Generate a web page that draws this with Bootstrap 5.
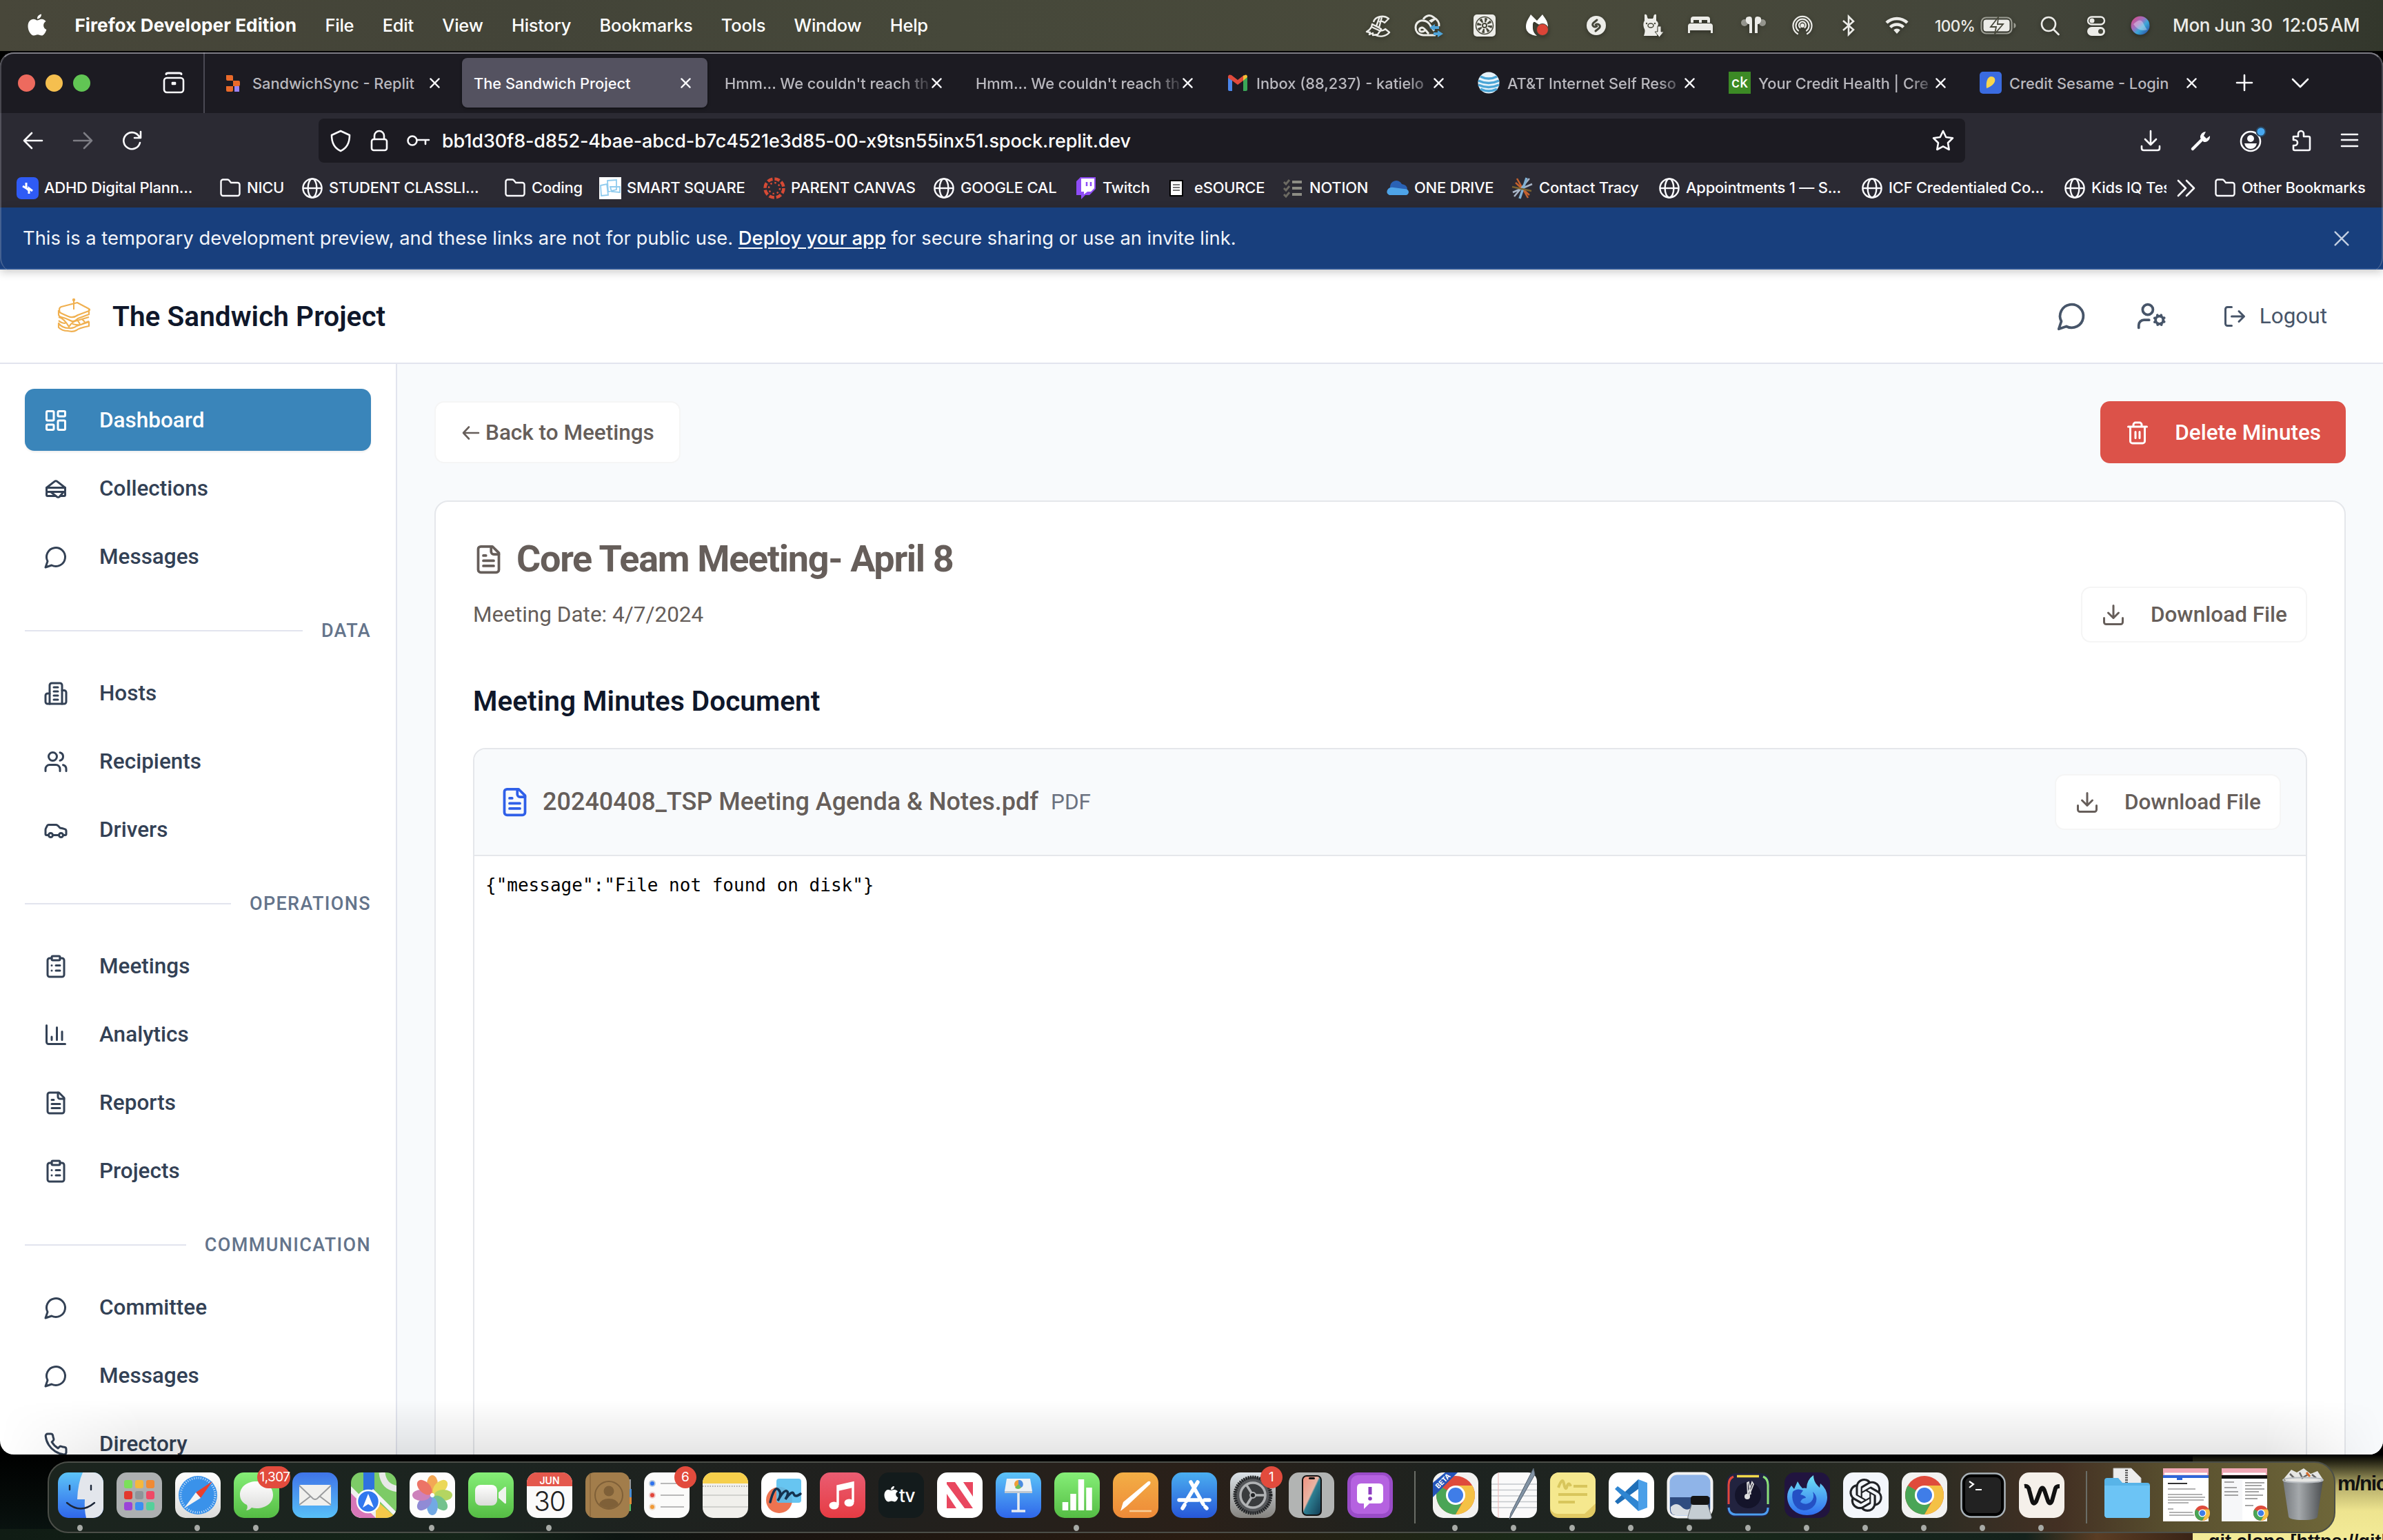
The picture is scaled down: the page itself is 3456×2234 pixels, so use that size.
<!DOCTYPE html>
<html lang="en">
<head>
<meta charset="utf-8">
<title>The Sandwich Project</title>
<link href="https://cdn.jsdelivr.net/npm/bootstrap@5.3.0/dist/css/bootstrap.min.css" rel="stylesheet">
<style>
:root{--ink:#334155;--stone:#665e5a;--line:#e2e4ee}
body{width:3456px;height:2234px;overflow:hidden;background:#000;font-family:Inter,"Liberation Sans",sans-serif;color:#fff;line-height:1.2}
svg{display:block;flex:none;overflow:visible}
.lu{width:36px;height:36px;fill:none;stroke:currentColor;stroke-width:2;stroke-linecap:round;stroke-linejoin:round}
.lu-lg{width:45px;height:45px}
.fx{width:32px;height:32px;fill:none;stroke:#fbfbfe;stroke-width:2.6;stroke-linecap:round;stroke-linejoin:round}
/* menu bar */
.menubar{height:74px;background:linear-gradient(90deg,#48473a 0,#434438 22%,#46483a 40%,#494a3b 65%,#43453a 85%,#33372c 100%);font-size:25.5px;font-weight:500}
.menus{padding-left:40px;gap:41.4px;letter-spacing:-.25px}
.menus b{font-size:26.2px;letter-spacing:.05px;margin-left:-1px}
.tray{padding-right:33px;color:#ecece8}
.tray svg{width:48px;height:48px;filter:drop-shadow(0 2px 3px rgba(0,0,0,.35))}
.tray .m16{margin-left:16px}.tray .m19{margin-left:19px}.tray .m22{margin-left:22px}.tray .m23{margin-left:23px}.tray .m25{margin-left:25px}.tray .m28{margin-left:28px}.tray .m29{margin-left:29px}.tray .m31{margin-left:31px}.tray .m33{margin-left:33px}.tray .m38{margin-left:38px}
.tray .batt{width:52px}
.pct{width:66px;font-size:22.5px;letter-spacing:-.6px}
.clockday{width:159px;margin-left:23px;font-size:26px;letter-spacing:-.35px}.clocktime{width:113px;font-size:26.6px;letter-spacing:-.4px;word-spacing:-4px;white-space:nowrap}
/* browser window */
.win{height:2034px;margin-top:2px;border-radius:20px;overflow:hidden;background:#fff;position:relative}
.win:before{content:"";position:absolute;inset:0;border-radius:20px;border:2px solid rgba(190,190,200,.28);border-top-color:rgba(190,190,200,.6);border-bottom:0;z-index:3;pointer-events:none;height:318px}
.tabbar{height:88px;background:#1c1b22;font-size:21.8px;font-weight:500;color:#b9b8be}
.lights{width:297px;border-right:2px solid #4b4a54;padding:0 27px 0 26px;gap:15px}
.light{width:25px;height:25px;border-radius:50%}
.light.r{background:#ed6a5e}.light.y{background:#f5bf4f}.light.g{background:#61c554}
.tabstrip{margin-left:9px}
.fftab{width:356px;height:72px;margin-right:8px;padding:0 24px 0 17px;border-radius:8px}
.fftab.on{background:#545260;color:#fbfbfe;box-shadow:0 1px 4px #0008}
.fftab .ttl{white-space:nowrap;flex:1 1 0;padding-top:3px}
.fftab .fav{width:32px;height:32px;margin-right:11px}
.fftab .x{width:15px;height:15px;stroke-width:2.4;margin-left:2px}
.fade-r{-webkit-mask-image:linear-gradient(90deg,#000 86%,transparent 102%);mask-image:linear-gradient(90deg,#000 86%,transparent 102%)}
.newtab{margin-left:21px}.alltabs{margin-left:49px}
.toolbar{height:80px;background:#2b2a33;padding-left:32px}
.navbtn{margin-left:40px}.navbtn.dim{opacity:.4}
.urlbar{width:2388px;height:64px;border-radius:8px;background:#1c1b22;font-size:27px;font-weight:500;margin-left:254px;padding:0 16px;gap:24px}
.urltext{margin-left:-5px;padding-top:2px;letter-spacing:-.12px}
.tools{margin-left:253px;gap:40.500px}
.marks{height:57px;background:#2b2a33;font-size:22px;font-weight:500;color:#fbfbfe;display:grid;grid-template-columns:294px 119px 294px 138px 238px 246px 206px 133px 167px 152px 181px 213px 294px 294px 149px 69px auto;padding-left:24px;align-items:center;white-space:nowrap;letter-spacing:-.25px}
.marks svg{width:32px;height:32px}
.marks .more{margin-left:13px}
.bm{gap:8px;overflow:hidden}
.banner{height:90px;background:#183f7d;border-bottom:2px solid #2a5291;font-size:27.35px;padding:2px 45px 0 33px;box-shadow:0 4px 12px rgba(0,0,0,.2);position:relative;z-index:2;color:#f2f5fa}
.banner a{color:#fff;font-weight:500;text-underline-offset:4px}
.banner svg{width:30px;height:30px;stroke:#c3cfe2}
/* application */
.app{font-family:Roboto,sans-serif;font-size:31.5px;font-weight:500;color:var(--ink)}
.apphead{height:137px;border-bottom:2px solid var(--line);padding:0 81px;color:#475569}
.brand{font-size:40.5px;font-weight:600;color:#0f172a;letter-spacing:.05px;gap:28px}
.brand span{padding-top:2px}
.acts .cog{margin-left:71px}.acts .out{margin-left:80px}.acts span{margin-left:18px;padding-top:1px}
.side{width:576px;height:1582px;border-right:2px solid var(--line);padding:36px 36px 0;overflow:hidden;flex:none}
.side .item{height:90px;padding:2px 0 0 27px;margin-bottom:9px;gap:45px;border-radius:14px;color:var(--ink);font-weight:500}
.side .item.on{background:#3a85ba;color:#fff;box-shadow:0 2px 3px #0001}
.sect{height:36px;margin:45px 0 27px;gap:27px;font-size:27px;color:#64748b;letter-spacing:1.35px;font-weight:500}
.sect i{height:2px;background:var(--line);flex:1}
.main{background:#f8fafc;padding:54px 54px 0;height:1582px;overflow:hidden}
.obtn{background:#fff;border:2px solid #f5f5f5;border-radius:14px;color:var(--stone);font-weight:500}
.obtn.sm{height:81px;padding:0 27px;gap:36px}
.obtn.back{height:90px;padding:1px 36px 0}
.obtn.back svg{stroke-width:2.6}
.del{height:90px;padding:1px 36px 0;gap:36px;border-radius:14px;background:#dc5249;color:#fff}
.panel{margin-top:54px;border:2px solid #e5e7eb;border-radius:20px;background:#fff;padding:54px;height:1500px;color:var(--stone)}
.h-title{font-size:54px;font-weight:700;line-height:54px;letter-spacing:-1.33px;gap:18px;padding-top:2px}
.daterow{margin-top:13px}
.h-doc{font-size:40.5px;line-height:63px;font-weight:600;color:#0f172a;margin:54px 0 36px;letter-spacing:.03px}
.viewer{border:2px solid #e5e7eb;border-radius:18px;overflow:hidden;height:1300px}
.viewer .vh{background:#f8fafc;border-bottom:2px solid #e5e7eb;padding:36px;height:155px;gap:18px}
.viewer .vh>svg{color:#2f5fe8}
.fname{font-size:36px}.ftype{color:#6b7280}
.viewer pre{font:26px/36px "DejaVu Sans Mono",monospace;color:#000;padding:24px 16px;margin:0;overflow:hidden}
.shade{position:absolute;left:0;right:0;bottom:0;height:80px;background:linear-gradient(#0000,rgba(0,0,0,.1));-webkit-mask-image:linear-gradient(90deg,transparent 0,#000 6%,#000 95%,transparent 100%);mask-image:linear-gradient(90deg,transparent 0,#000 6%,#000 95%,transparent 100%)}
/* desktop and dock */
.desk{height:124px;background:linear-gradient(#000 0,#050a08 50%,#0a1512 100%);position:relative;overflow:hidden}
.leaves{position:absolute;inset:auto 0 0 0;height:16px;background:linear-gradient(90deg,#101c14,#16261a 20%,#0d1512 26%,#1a1410 33%,#2a1c12 50%,#1a2a18 64%,#14221c 85%,#5a3d24 88%,#3a2416 92%)}
.sticky-note{position:absolute;left:3180px;top:0;width:276px;height:124px;background:linear-gradient(#000 0,#2f2d1a 10%,#b5ad6a 36%,#eee48f 66%,#f3eb98);color:#111;font:bold 30px "Liberation Sans",sans-serif;white-space:nowrap;overflow:hidden}
.sticky-note span{position:absolute}
.sticky-note .l1{left:210px;top:25px;letter-spacing:-1.5px}.sticky-note .l2{left:23px;top:111px;font-size:27px}
.dock{position:absolute;left:69px;top:10px;width:3318px;height:104px;border-radius:30px;border:2px solid #4b4e48;background:linear-gradient(90deg,#1b241e 0,#1c2420 20%,#20201e 35%,#2a2019 50%,#1d2320 62%,#222721 75%,#2c2c23 82%,#433023 88%,#59502f 93%,#6e6639 100%);padding-left:3.5px}
.cell{width:85px;height:100px;padding-top:14px;position:relative;flex:none}
.cell svg{width:66px;height:66px;margin:0 auto}
.cell.run:after{content:"";position:absolute;left:37px;top:90px;width:8px;height:9px;border-radius:50%;background:#a7aaa6}
.rule{width:2px;height:76px;margin:12px 16px 0 21px;background:#6a6d66;flex:none}
.note-badge{position:absolute;top:5px;right:0;min-width:32px;height:32px;border-radius:16px;background:#e24b3d;font-size:19px;line-height:32px;text-align:center;padding:0 4px;letter-spacing:-.6px}
.note-badge.wide{right:-6px;width:48px}
</style>
<script src="https://cdn.jsdelivr.net/npm/bootstrap@5.3.0/dist/js/bootstrap.bundle.min.js"></script>
</head>
<body>
<svg width="0" height="0" class="position-absolute" aria-hidden="true">
<defs>
<linearGradient id="gBlue" x2="0" y2="1"><stop stop-color="#3f74e8"/><stop offset="1" stop-color="#58c0f8"/></linearGradient>
<linearGradient id="gSky" x2="0" y2="1"><stop stop-color="#5cc4f8"/><stop offset="1" stop-color="#2f66ea"/></linearGradient>
<linearGradient id="gGreen" x2="0" y2="1"><stop stop-color="#85ee77"/><stop offset="1" stop-color="#55bd44"/></linearGradient>
<linearGradient id="gRed" x2="0" y2="1"><stop stop-color="#ea5d72"/><stop offset="1" stop-color="#e63b43"/></linearGradient>
<linearGradient id="gOrange" x2="0" y2="1"><stop stop-color="#f3ae45"/><stop offset="1" stop-color="#ee8a38"/></linearGradient>
<linearGradient id="gWhite" x2="0" y2="1"><stop stop-color="#fff"/><stop offset="1" stop-color="#dcdcda"/></linearGradient>
<linearGradient id="gGrey" x2="0" y2="1"><stop stop-color="#dbe2e8"/><stop offset="1" stop-color="#85837f"/></linearGradient>
<linearGradient id="gStore" x2="0" y2="1"><stop stop-color="#4aaef0"/><stop offset="1" stop-color="#2757d8"/></linearGradient>
<linearGradient id="gFire" x2="0" y2="1"><stop stop-color="#6fe3f5"/><stop offset="1" stop-color="#2f6df0"/></linearGradient>
<linearGradient id="gPhone" x2="1" y2="1"><stop stop-color="#f1907e"/><stop offset=".45" stop-color="#e9b5a4"/><stop offset=".5" stop-color="#2d7f92"/><stop offset="1" stop-color="#123a52"/></linearGradient>
<linearGradient id="gTrash" x2="1"><stop stop-color="#75797d"/><stop offset=".4" stop-color="#a5a9ac"/><stop offset="1" stop-color="#4c4f52"/></linearGradient>
<linearGradient id="gSiri" x2="1" y2="1"><stop stop-color="#e0457b"/><stop offset=".4" stop-color="#a06fc0"/><stop offset=".6" stop-color="#3aa8d8"/><stop offset="1" stop-color="#283c9c"/></linearGradient>
<symbol id="globe" viewBox="0 0 32 32"><g fill="none" stroke="#fbfbfe" stroke-width="2.4"><circle cx="16" cy="16" r="13.6"/><ellipse cx="16" cy="16" rx="6.4" ry="13.6"/><path d="M3 16h26"/></g></symbol>
<symbol id="folder" viewBox="0 0 32 32"><path d="M2.500 24V6.500a3 3 0 0 1 3-3h6.500a3 3 0 0 1 2.400 1.200L17 8h9.500a3 3 0 0 1 3 3v13a3 3 0 0 1-3 3h-21a3 3 0 0 1-3-3z" fill="none" stroke="#fbfbfe" stroke-width="2.400"/></symbol>
<symbol id="ffx" viewBox="0 0 16 16"><path d="M1.500 1.500l13 13M14.500 1.500l-13 13"/></symbol>
<symbol id="dash" viewBox="0 0 24 24"><rect width="7" height="9" x="3" y="3" rx="1"/><rect width="7" height="5" x="14" y="3" rx="1"/><rect width="7" height="9" x="14" y="12" rx="1"/><rect width="7" height="5" x="3" y="16" rx="1"/></symbol>
<symbol id="sandwich" viewBox="0 0 24 24"><path d="M3 11v3a1 1 0 0 0 1 1h16a1 1 0 0 0 1-1v-3"/><path d="M12 19H4a1 1 0 0 1-1-1v-2a1 1 0 0 1 1-1h16a1 1 0 0 1 1 1v2a1 1 0 0 1-1 1h-3.830"/><path d="m3 11 7.770-6.040a2 2 0 0 1 2.460 0L21 11H3Z"/><path d="M12.970 19.770 7 15h12.500l-3.750 4.500a2 2 0 0 1-2.780.270Z"/></symbol>
<symbol id="chat" viewBox="0 0 24 24"><path d="M7.900 20A9 9 0 1 0 4 16.100L2 22Z"/></symbol>
<symbol id="building" viewBox="0 0 24 24"><path d="M6 22V4a2 2 0 0 1 2-2h8a2 2 0 0 1 2 2v18Z"/><path d="M6 12H4a2 2 0 0 0-2 2v6a2 2 0 0 0 2 2h2"/><path d="M18 9h2a2 2 0 0 1 2 2v9a2 2 0 0 1-2 2h-2"/><path d="M10 6h4M10 10h4M10 14h4M10 18h4"/></symbol>
<symbol id="users" viewBox="0 0 24 24"><path d="M16 21v-2a4 4 0 0 0-4-4H6a4 4 0 0 0-4 4v2"/><circle cx="9" cy="7" r="4"/><path d="M22 21v-2a4 4 0 0 0-3-3.870M16 3.130a4 4 0 0 1 0 7.750"/></symbol>
<symbol id="car" viewBox="0 0 24 24"><path d="M19 17h2c.6 0 1-.4 1-1v-3c0-.9-.7-1.700-1.500-1.900C18.700 10.600 16 10 16 10s-1.300-1.400-2.200-2.300c-.5-.4-1.100-.7-1.800-.7H5c-.6 0-1.100.4-1.400.9l-1.400 2.900A3.700 3.700 0 0 0 2 12v4c0 .6.4 1 1 1h2"/><circle cx="7" cy="17" r="2"/><path d="M9 17h6"/><circle cx="17" cy="17" r="2"/></symbol>
<symbol id="clip" viewBox="0 0 24 24"><rect width="8" height="4" x="8" y="2" rx="1"/><path d="M16 4h2a2 2 0 0 1 2 2v14a2 2 0 0 1-2 2H6a2 2 0 0 1-2-2V6a2 2 0 0 1 2-2h2M12 11h4M12 16h4M8 11h.01M8 16h.01"/></symbol>
<symbol id="chart" viewBox="0 0 24 24"><path d="M3 3v16a2 2 0 0 0 2 2h16M18 17V9M13 17V5M8 17v-3"/></symbol>
<symbol id="file" viewBox="0 0 24 24"><path d="M15 2H6a2 2 0 0 0-2 2v16a2 2 0 0 0 2 2h12a2 2 0 0 0 2-2V7Z"/><path d="M14 2v4a2 2 0 0 0 2 2h4M10 9H8M16 13H8M16 17H8"/></symbol>
<symbol id="phone" viewBox="0 0 24 24"><path d="M22 16.920v3a2 2 0 0 1-2.180 2 19.790 19.790 0 0 1-8.630-3.070 19.500 19.500 0 0 1-6-6 19.790 19.790 0 0 1-3.070-8.670A2 2 0 0 1 4.110 2h3a2 2 0 0 1 2 1.720 12.840 12.840 0 0 0 .7 2.810 2 2 0 0 1-.45 2.110L8.090 9.910a16 16 0 0 0 6 6l1.270-1.270a2 2 0 0 1 2.110-.45 12.840 12.840 0 0 0 2.810.7A2 2 0 0 1 22 16.920z"/></symbol>
<symbol id="trash" viewBox="0 0 24 24"><path d="M3 6h18M19 6v14c0 1-1 2-2 2H7c-1 0-2-1-2-2V6M8 6V4c0-1 1-2 2-2h4c1 0 2 1 2 2v2M10 11v6M14 11v6"/></symbol>
<symbol id="down" viewBox="0 0 24 24"><path d="M21 15v4a2 2 0 0 1-2 2H5a2 2 0 0 1-2-2v-4M7 10l5 5 5-5M12 15V3"/></symbol>
<symbol id="chrome" viewBox="0 0 66 66"><circle cx="33" cy="33" r="28" fill="#df4b3c"/><path d="M33 33L8.800 19A28 28 0 0 0 33 61l8-14z" fill="#4aa556"/><path d="M33 19h24.200A28 28 0 0 1 33 61l12.200-21z" fill="#f4c145"/><circle cx="33" cy="33" r="14" fill="#fff"/><circle cx="33" cy="33" r="11" fill="#3f7de8"/></symbol>
</defs>
</svg>

<header class="menubar d-flex justify-content-between align-items-center">
  <div class="menus d-flex align-items-center">
    <svg width="28" height="34" viewBox="0 0 28 34" fill="#fff"><path d="M20 .500c.2 3.800-2.800 7-6 7C13.500 4 16.800.900 20 .500zM14 9.500c1.500 0 3.500-1.800 6.500-1.800 2.600 0 4.800 1.300 6 3.200-5 3-4.200 10 .9 12-1.200 3.800-4 8.600-7 8.600-2.200 0-3-1.300-5.700-1.300s-3.500 1.300-5.700 1.300C4.500 31.500.500 24 .500 18c0-6.500 4-10.200 8-10.200 2.500 0 4 1.700 5.500 1.700z"/></svg>
    <b>Firefox Developer Edition</b><span>File</span><span>Edit</span><span>View</span><span>History</span><span>Bookmarks</span><span>Tools</span><span>Window</span><span>Help</span>
  </div>
  <div class="tray d-flex align-items-center">
    <svg viewBox="0 0 48 48" fill="none" stroke="#ecece8" stroke-width="2.400" stroke-linejoin="round"><path d="M19 19c2-8 14-11 22-5l-6 6c-2-2-5-3-8-1M28 30c3 2 6 1 8-1l6 5c-5 6-14 7-20 4M28 11l-5 14 4 2 4-15M17 22l13 7-1 3-13-6zM16 26c-2 4-5 6-7 7l5 1-1 3 5-2v3l7-1 4-6"/></svg>
    <svg class="m29" viewBox="0 0 48 48" fill="none" stroke="#ecece8" stroke-width="3"><path d="M32 38H14C6 37 3 32 3 27c0-7 6-11 11-10 6 0 9 4 11 8l5 7M14 15c4-6 10-7 15-3 5 3 9 7 8 13M22 36c-4-4-6-9-10-9-5 1-4 6 0 6 3 0 4-1 6-3"/><path d="M22 17q6-5 12-3l-8 6z" fill="#ecece8" stroke="none"/><path d="M23 27l8-5v3h6v4h-6v3zM43 36l-8-5v3h-6v4h6v3z" fill="#4ea3d8" stroke="none"/></svg>
    <svg class="m31" viewBox="0 0 48 48"><rect x="8" y="8" width="32" height="32" rx="5" fill="#ecece8"/><g fill="none" stroke="#46473a"><circle cx="24" cy="24" r="12.500" stroke-width="1.500"/><circle cx="24" cy="24" r="8" stroke-width="6" stroke-dasharray="3 3.280"/><circle cx="24" cy="24" r="3" stroke-width="2"/></g></svg>
    <svg class="m28" viewBox="0 0 48 48"><path d="M8 26c0-8 4-12 7-18l9 9 8-9c4 6 8 10 8 18-6-5-8 0-16-5-4-3-5-3-6 1 0 6-1 11 6 17C15 38 8 34 8 26z" fill="#fff"/><circle cx="32" cy="30" r="8.500" fill="#dc4437" stroke="#46473a"/></svg>
    <svg class="m38" viewBox="0 0 48 48"><circle cx="24" cy="24" r="14" fill="#ecece8"/><path d="M25 16l-5 4c-4 4 2 8 5 5M23 32l5-4c4-4-2-8-5-5" fill="none" stroke="#46473a" stroke-width="3" stroke-linecap="round"/></svg>
    <svg class="m33" viewBox="0 0 48 48" fill="#ecece8"><path d="M13 17V9c0-2 4-2 4 3l1 2h7l1-2c0-5 4-5 4-3v8c4 3 3 6 2 8l-1 14H12c2-7 2-8 0-12-1-4-1-7 1-10z"/><ellipse cx="22" cy="24" rx="4" ry="3" fill="none" stroke="#46473a" stroke-width="1.500"/><circle cx="16" cy="21" r="1.200" fill="#46473a"/><circle cx="28" cy="21" r="1.200" fill="#46473a"/><path d="M32 25h5v8h4l-6.500 8-6.500-8h4z" stroke="#46473a"/></svg>
    <svg class="m22" viewBox="0 0 48 48" fill="#ecece8"><path d="M10 20v-5q0-4 4-4h20q4 0 4 4v5h-4v-4h-8v4h-4v-4h-8v4zM6 35V25q0-4 4-4h28q4 0 4 4v10h-3v-4H9v4z"/></svg>
    <svg class="m29" viewBox="0 0 48 48" fill="#ecece8"><circle cx="11" cy="20" r="5" opacity=".5"/><circle cx="37" cy="20" r="5" opacity=".5"/><path d="M14 12c8-3 8 1 8 6v17h-4V22c-4 0-7-6-4-10zM34 12c-8-3-8 1-8 6v17h4V22c4 0 7-6 4-10z"/></svg>
    <svg class="m23" viewBox="0 0 48 48" fill="none" stroke="#ecece8" stroke-width="2.200" stroke-linecap="round"><path d="M17 36a13.500 13.500 0 1 1 14 0M18 31.500a9.500 9.500 0 1 1 12 0M20.500 27a5 5 0 1 1 7 0"/><circle cx="24" cy="24" r="1.800" fill="#ecece8"/></svg>
    <svg class="m19" viewBox="0 0 48 48" fill="none" stroke="#ecece8" stroke-width="2.600"><path d="M16 17l15 13-7 7V11l7 7-15 13"/></svg>
    <svg class="m22" viewBox="0 0 48 48" fill="none" stroke="#ecece8" stroke-width="4.500"><path d="M9 20a21.500 21.500 0 0 1 30 0M14.500 26.500a13.500 13.500 0 0 1 19 0"/><path d="M24 36l-4.800-5.500a7 7 0 0 1 9.600 0z" fill="#ecece8" stroke="none"/></svg>
    <span class="pct m31">100%</span>
    <svg class="batt" viewBox="0 0 52 48"><rect x="1.500" y="12.500" width="44" height="23" rx="7" fill="none" stroke="#9c9d93" stroke-width="2.200"/><path d="M48.500 20v8q3-1 3-4t-3-4z" fill="#9c9d93"/><rect x="4.500" y="15.500" width="38" height="17" rx="4" fill="#ecece8"/><path d="M26 12l-11 14h8l-2 10 12-14h-8z" fill="#ecece8" stroke="#46473a" stroke-width="1.800"/></svg>
    <svg class="m25" viewBox="0 0 48 48" fill="none" stroke="#ecece8" stroke-width="2.600" stroke-linecap="round"><circle cx="22" cy="22" r="10"/><path d="M29.500 30l7 7"/></svg>
    <svg class="m19" viewBox="0 0 48 48"><rect x="12" y="11.500" width="24" height="11" rx="5.500" fill="none" stroke="#ecece8" stroke-width="2.400"/><circle cx="18" cy="17" r="3.500" fill="#ecece8"/><rect x="11" y="26" width="26" height="13" rx="6.500" fill="#ecece8"/><circle cx="30.500" cy="32.500" r="3.500" fill="#44463a"/></svg>
    <svg class="m16" viewBox="0 0 48 48"><circle cx="24" cy="24" r="13.500" fill="url(#gSiri)"/><path d="M14 22q10-10 14-2t6 10q-12 4-20-8z" fill="#fff" opacity=".35"/></svg>
    <span class="clockday">Mon Jun 30</span><span class="clocktime">12:05 AM</span>
  </div>
</header>

<section class="win">
  <div class="tabbar d-flex align-items-center">
    <div class="lights d-flex align-items-center h-100">
      <i class="light r"></i><i class="light y"></i><i class="light g"></i>
      <svg class="fx ms-auto" viewBox="0 0 32 32"><rect x="2" y="9" width="28" height="21" rx="4"/><path d="M5 3.500q0-1.500 3-1.500h16q3 0 3 1.500" stroke-width="3"/><rect x="14" y="16" width="4" height="2"/></svg>
    </div>
    <div class="tabstrip d-flex">
      <div class="fftab d-flex align-items-center"><svg class="fav" viewBox="0 0 32 32"><path d="M5 5h8q2 0 2 2v6H7q-2 0-2-2zM15 13h8q2 0 2 2v4q0 2-2 2h-8zM5 21h10v6q0 2-2 2H7q-2 0-2-2z" fill="#ea6a2a"/><rect x="17" y="21" width="7" height="8" fill="#9a83f5"/></svg><span class="ttl">SandwichSync - Replit</span><svg class="fx x"><use href="#ffx"/></svg></div>
      <div class="fftab on d-flex align-items-center"><span class="ttl">The Sandwich Project</span><svg class="fx x"><use href="#ffx"/></svg></div>
      <div class="fftab d-flex align-items-center"><span class="ttl fade-r">Hmm... We couldn't reach th</span><svg class="fx x"><use href="#ffx"/></svg></div>
      <div class="fftab d-flex align-items-center"><span class="ttl fade-r">Hmm... We couldn't reach th</span><svg class="fx x"><use href="#ffx"/></svg></div>
      <div class="fftab d-flex align-items-center"><svg class="fav" viewBox="0 0 32 32"><path d="M2 8v18q0 2 2 2h4V12z" fill="#4a86ea"/><path d="M30 8v18q0 2-2 2h-4V12z" fill="#3aa757"/><path d="M2 8q0-5 5-3l9 7 9-7-1 8-8 6-8-6-6-4z" fill="#e04a3c"/><path d="M24 6q6-4 6 2l-6 5z" fill="#f5bf35"/></svg><span class="ttl fade-r">Inbox (88,237) - katielo</span><svg class="fx x"><use href="#ffx"/></svg></div>
      <div class="fftab d-flex align-items-center"><svg class="fav" viewBox="0 0 32 32"><circle cx="16" cy="16" r="15.500" fill="#e6f3fa"/><path d="M4 7q12 6 24 0M1 13q15 7 30 0M1 19q15 7 30 0M4 25q12 6 24 0" fill="none" stroke="#4aa5d6" stroke-width="3.500"/></svg><span class="ttl fade-r">AT&amp;T Internet Self Reso</span><svg class="fx x"><use href="#ffx"/></svg></div>
      <div class="fftab d-flex align-items-center"><svg class="fav" viewBox="0 0 32 32"><rect width="32" height="32" fill="#3c8a25"/><text x="16" y="23" font-size="21" text-anchor="middle" fill="#fff">ck</text></svg><span class="ttl fade-r">Your Credit Health | Cre</span><svg class="fx x"><use href="#ffx"/></svg></div>
      <div class="fftab d-flex align-items-center"><svg class="fav" viewBox="0 0 32 32"><rect width="32" height="32" rx="5" fill="#3a6be0"/><path d="M10 24c-1-9 1-17 7-17 8 0 8 12-7 17z" fill="#f8d64c"/></svg><span class="ttl">Credit Sesame - Login</span><svg class="fx x"><use href="#ffx"/></svg></div>
    </div>
    <svg class="fx newtab" viewBox="0 0 32 32"><path d="M16 5v22M5 16h22"/></svg>
    <svg class="fx alltabs" viewBox="0 0 32 32"><path d="M5 11l11 11 11-11"/></svg>
  </div>

  <div class="toolbar d-flex align-items-center">
    <svg class="fx" viewBox="0 0 32 32"><path d="M29 16H3M14 5L3 16l11 11"/></svg>
    <svg class="fx navbtn dim" viewBox="0 0 32 32"><path d="M3 16h26M18 5l11 11-11 11"/></svg>
    <svg class="fx navbtn" viewBox="0 0 32 32"><path d="M27 19a12 12 0 1 1-2-10l2 2M28 3v9h-9"/></svg>
    <div class="urlbar d-flex align-items-center">
      <svg class="fx" viewBox="0 0 32 32"><path d="M16 2l13 6c0 11-4 19-13 23C7 27 3 19 3 8z"/></svg>
      <svg class="fx" viewBox="0 0 32 32"><rect x="5" y="14" width="22" height="16" rx="3"/><path d="M9 14V9a7 7 0 0 1 14 0v5"/></svg>
      <svg class="fx" viewBox="0 0 32 32"><circle cx="8" cy="16" r="6.500"/><path d="M15 15h17M27 15v6"/></svg>
      <span class="flex-grow-1 urltext">bb1d30f8-d852-4bae-abcd-b7c4521e3d85-00-x9tsn55inx51.spock.replit.dev</span>
      <svg class="fx" viewBox="0 0 32 32"><path d="M16 2l4.300 9 9.700 1.300-7 6.900 1.700 9.800L16 24.400 7.300 29 9 19.200 2 12.300 11.700 11z"/></svg>
    </div>
    <div class="tools d-flex align-items-center">
      <svg class="fx" viewBox="0 0 32 32"><path d="M16 2v20M8 14l8 8 8-8M3 24v3q0 3 3 3h20q3 0 3-3v-3"/></svg>
      <svg class="fx" viewBox="0 0 32 32"><path d="M4 28L18 14" stroke-width="4.500"/><path d="M23 3a8 8 0 0 0-8 9l5 6a8 8 0 0 0 9-9l-5 4-4-4z" fill="#fbfbfe" stroke="none"/></svg>
      <svg class="fx" viewBox="0 0 32 32"><circle cx="16" cy="17" r="14"/><circle cx="16" cy="13" r="5" fill="#fbfbfe" stroke="none"/><path d="M7 20h18q-2 8-9 8t-9-8z" fill="#fbfbfe" stroke="none"/><circle cx="31" cy="3" r="6.500" fill="#48a8f0" stroke="#2b4a66" stroke-width="2"/></svg>
      <svg class="fx" viewBox="0 0 32 32"><path d="M5 10h7V6a4 4 0 0 1 8 0v4h7q2 0 2 2v16q0 2-2 2H7q-2 0-2-2v-5h2a4 4 0 0 0 0-8H5v-3z"/></svg>
      <svg class="fx" viewBox="0 0 32 32"><path d="M3 7h23M3 15h23M3 24h23"/></svg>
    </div>
  </div>

  <nav class="marks">
    <div class="bm d-flex align-items-center"><svg viewBox="0 0 32 32"><rect width="32" height="32" rx="7" fill="#2f5bf5"/><path d="M14 8v8l-5-3M18 24v-8l5 4M13 15l6 5" fill="none" stroke="#fff" stroke-width="3"/></svg>ADHD Digital Plann...</div>
    <div class="bm d-flex align-items-center"><svg><use href="#folder"/></svg>NICU</div>
    <div class="bm d-flex align-items-center"><svg><use href="#globe"/></svg>STUDENT CLASSLI...</div>
    <div class="bm d-flex align-items-center"><svg><use href="#folder"/></svg>Coding</div>
    <div class="bm d-flex align-items-center"><svg viewBox="0 0 32 32"><rect width="32" height="32" fill="#fff"/><path d="M2 12l9-2 2 16-10 1zM12 5l13-1v14l-12 3zM16 14h14v8l-12-1z" fill="none" stroke="#8fcbee" stroke-width="1.800"/></svg>SMART SQUARE</div>
    <div class="bm d-flex align-items-center"><svg viewBox="0 0 32 32" fill="none" stroke="#d64a35"><circle cx="16" cy="16" r="13.500" stroke-width="4.500" stroke-dasharray="7.600 3"/><circle cx="16" cy="16" r="8" stroke-width="2.500" stroke-dasharray="2.500 3.780"/></svg>PARENT CANVAS</div>
    <div class="bm d-flex align-items-center"><svg><use href="#globe"/></svg>GOOGLE CAL</div>
    <div class="bm d-flex align-items-center"><svg viewBox="0 0 32 32"><path d="M2 6l6-6h22v17l-9 9h-6l-6 6v-6H2z" fill="#8f4cf6"/><path d="M9 2h19v14l-5 5h-5l-5 4v-4H9z" fill="#fff"/><path d="M17 7v6M23 7v6" stroke="#8f4cf6" stroke-width="2.500"/></svg>Twitch</div>
    <div class="bm d-flex align-items-center"><svg viewBox="0 0 32 32"><rect x="5" y="5" width="18" height="22" fill="#fff" stroke="#000" stroke-width="2"/><path d="M9 11h10M9 15h10M9 19h10" stroke="#777" stroke-width="2"/></svg>eSOURCE</div>
    <div class="bm d-flex align-items-center"><svg viewBox="0 0 32 32"><path d="M15 7h14M15 16h14M15 25h14" stroke="#8c8c84" stroke-width="4"/><path d="M3 7l3 3 5-6M3 16l3 3 5-6M3 25l3 3 5-6" fill="none" stroke="#6c6a62" stroke-width="3"/></svg>NOTION</div>
    <div class="bm d-flex align-items-center"><svg viewBox="0 0 32 32"><path d="M5 15a9 9 0 0 1 17-5q8 1 8 8l-24 6q-6-1-5-5 1-3 4-4z" fill="#2a62b5"/><path d="M4 26q-5-2-3-7 3-5 9-4l15 2q7 0 7 5-1 4-4 4z" fill="#4ea4e8"/></svg>ONE DRIVE</div>
    <div class="bm d-flex align-items-center"><svg viewBox="0 0 32 32" stroke-width="2.500"><path d="M6 8l20 18M8 2l16 28" stroke="#c5622e"/><path d="M26 2L4 28M30 10L2 22" stroke="#a9b6c8"/><path d="M22 1l-10 30" stroke="#7fb0d4" stroke-width="3.500"/><path d="M1 14l28 6" stroke="#7a6230"/></svg>Contact Tracy</div>
    <div class="bm d-flex align-items-center"><svg><use href="#globe"/></svg>Appointments 1 — S...</div>
    <div class="bm d-flex align-items-center"><svg><use href="#globe"/></svg>ICF Credentialed Co...</div>
    <div class="bm d-flex align-items-center"><svg><use href="#globe"/></svg>Kids IQ Tes</div>
    <svg class="fx more" viewBox="0 0 32 32"><path d="M4 5l11 11L4 27M16 5l11 11-11 11"/></svg>
    <div class="bm d-flex align-items-center"><svg><use href="#folder"/></svg>Other Bookmarks</div>
  </nav>

  <div class="banner d-flex justify-content-between align-items-center">
    <span>This is a temporary development preview, and these links are not for public use. <a href="#">Deploy your app</a> for secure sharing or use an invite link.</span>
    <svg class="fx" viewBox="0 0 32 32"><path d="M6 6l20 20M26 6L6 26"/></svg>
  </div>

  <div class="app">
    <div class="apphead d-flex align-items-center justify-content-between">
      <div class="brand d-flex align-items-center">
        <svg width="54" height="54" viewBox="0 0 54 54" fill="none" stroke="#f0b050" stroke-width="2.200" stroke-linejoin="round"><path d="M26 2v15" stroke-width="2"/><circle cx="26" cy="3" r="2.200" fill="#f0b050" stroke="none"/><path d="M5 17q0-3 3-4l23-6 17 9q2 1 0 3l-16 6q-7 5-14 2t-11-5q-2-1-2-5zM4 18v6q0 3 4 4 8 2 13 5t11-3l16-6v-7M4 28q8 2 15 14 5-8 12-9l17-5M4 33q4 4 10 4M24 38q12 3 16-1l8-3M31 32l4 6M38 31l4 4M4 37v6q5 5 13 5 8 2 13-1 3-3 18-6v-6l-18 6q-5 4-11 3-10 0-15-7z"/></svg>
        <span>The Sandwich Project</span>
      </div>
      <div class="acts d-flex align-items-center fw-normal">
        <svg class="lu lu-lg"><use href="#chat"/></svg>
        <svg class="lu lu-lg cog" viewBox="0 0 24 24"><circle cx="18" cy="15" r="3"/><circle cx="9" cy="7" r="4"/><path d="M10 15H6a4 4 0 0 0-4 4v2M21.700 16.400l-.9-.3M15.200 13.900l-.9-.3M16.600 18.700l.3-.9M19.100 12.200l.3-.9M19.600 18.700l-.4-1M16.800 12.300l-.4-1M14.300 16.600l1-.4M20.700 13.800l1-.4"/></svg>
        <svg class="lu out" viewBox="0 0 24 24"><path d="M9 21H5a2 2 0 0 1-2-2V5a2 2 0 0 1 2-2h4M16 17l5-5-5-5M21 12H9"/></svg>
        <span>Logout</span>
      </div>
    </div>
    <div class="d-flex">
      <aside class="side">
        <div class="item on d-flex align-items-center"><svg class="lu"><use href="#dash"/></svg>Dashboard</div>
        <div class="item d-flex align-items-center"><svg class="lu"><use href="#sandwich"/></svg>Collections</div>
        <div class="item d-flex align-items-center"><svg class="lu"><use href="#chat"/></svg>Messages</div>
        <div class="sect d-flex align-items-center"><i></i>DATA</div>
        <div class="item d-flex align-items-center"><svg class="lu"><use href="#building"/></svg>Hosts</div>
        <div class="item d-flex align-items-center"><svg class="lu"><use href="#users"/></svg>Recipients</div>
        <div class="item d-flex align-items-center"><svg class="lu"><use href="#car"/></svg>Drivers</div>
        <div class="sect d-flex align-items-center"><i></i>OPERATIONS</div>
        <div class="item d-flex align-items-center"><svg class="lu"><use href="#clip"/></svg>Meetings</div>
        <div class="item d-flex align-items-center"><svg class="lu"><use href="#chart"/></svg>Analytics</div>
        <div class="item d-flex align-items-center"><svg class="lu"><use href="#file"/></svg>Reports</div>
        <div class="item d-flex align-items-center"><svg class="lu"><use href="#clip"/></svg>Projects</div>
        <div class="sect d-flex align-items-center"><i></i>COMMUNICATION</div>
        <div class="item d-flex align-items-center"><svg class="lu"><use href="#chat"/></svg>Committee</div>
        <div class="item d-flex align-items-center"><svg class="lu"><use href="#chat"/></svg>Messages</div>
        <div class="item d-flex align-items-center"><svg class="lu"><use href="#phone"/></svg>Directory</div>
      </aside>
      <main class="main flex-grow-1">
        <div class="d-flex justify-content-between">
          <div class="obtn back d-flex align-items-center"><svg class="lu" viewBox="0 0 36 36"><path d="M26 18H4M12 9.500L4 18l8 8.500"/></svg>Back to Meetings</div>
          <div class="del d-flex align-items-center"><svg class="lu"><use href="#trash"/></svg>Delete Minutes</div>
        </div>
        <section class="panel">
          <div class="h-title d-flex align-items-center"><svg class="lu lu-lg"><use href="#file"/></svg>Core Team Meeting- April 8</div>
          <div class="daterow d-flex justify-content-between align-items-center">
            <span class="fw-normal">Meeting Date: 4/7/2024</span>
            <div class="obtn sm d-flex align-items-center"><svg class="lu"><use href="#down"/></svg>Download File</div>
          </div>
          <h3 class="h-doc">Meeting Minutes Document</h3>
          <div class="viewer">
            <div class="vh d-flex align-items-center">
              <svg class="lu lu-lg"><use href="#file"/></svg>
              <span class="fname">20240408_TSP Meeting Agenda &amp; Notes.pdf</span>
              <span class="ftype fw-normal">PDF</span>
              <div class="obtn sm d-flex align-items-center ms-auto"><svg class="lu"><use href="#down"/></svg>Download File</div>
            </div>
            <pre>{"message":"File not found on disk"}</pre>
          </div>
        </section>
      </main>
    </div>
  </div>
  <div class="shade"></div>
</section>

<footer class="desk">
  <div class="leaves"></div>
  <div class="sticky-note"><span class="l1">m/nicu</span><span class="l2">git clone [https://githu</span></div>
  <div class="dock d-flex">
    <div class="cell run"><svg viewBox="0 0 66 66"><rect width="66" height="66" rx="15" fill="url(#gSky)"/><path d="M36 0h15a15 15 0 0 1 15 15v36a15 15 0 0 1-15 15H41q-3-12-2-27H28Q29 15 36 0z" fill="#e3e6ec"/><path d="M17 19v6M48 19v6M13 44q20 17 40 0" fill="none" stroke="#1c2638" stroke-width="2.400" stroke-linecap="round"/></svg></div>
    <div class="cell"><svg viewBox="0 0 66 66"><rect width="66" height="66" rx="15" fill="#adb0b1"/><g><rect x="11" y="11" width="12" height="12" rx="3" fill="#7be05a"/><rect x="27" y="11" width="12" height="12" rx="3" fill="#f5b83c"/><rect x="43" y="11" width="12" height="12" rx="3" fill="#f08a34"/><rect x="11" y="27" width="12" height="12" rx="3" fill="#e2382e"/><rect x="27" y="27" width="12" height="12" rx="3" fill="#8e9499"/><rect x="43" y="27" width="12" height="12" rx="3" fill="#ef4a66"/><rect x="11" y="43" width="12" height="12" rx="3" fill="#9a44d8"/><rect x="27" y="43" width="12" height="12" rx="3" fill="#3a8ff2"/><rect x="43" y="43" width="12" height="12" rx="3" fill="#55d09a"/></g></svg></div>
    <div class="cell run"><svg viewBox="0 0 66 66"><rect width="66" height="66" rx="15" fill="url(#gWhite)"/><circle cx="33" cy="33" r="28" fill="#3a92ea"/><circle cx="33" cy="33" r="25" fill="none" stroke="#fff" stroke-width="3" stroke-dasharray="1 2.270" opacity=".8"/><path d="M54 13L30 29l7 8z" fill="#e8402f"/><path d="M13 52l17-23 7 8z" fill="#f4f4f4"/></svg></div>
    <div class="cell run"><svg viewBox="0 0 66 66"><rect width="66" height="66" rx="15" fill="url(#gGreen)"/><path d="M33 13c14 0 24 8 24 19.500S47 52 33 52q-4 0-7-1-4 4-8 4 3-4 1-8C12 44 9 38 9 32.500 9 21 19 13 33 13z" fill="url(#gWhite)"/></svg><span class="note-badge wide">1,307</span></div>
    <div class="cell"><svg viewBox="0 0 66 66"><rect width="66" height="66" rx="15" fill="url(#gBlue)"/><rect x="10" y="18" width="46" height="30" rx="2" fill="#f0f0ee"/><path d="M10 19l20 19q3 2 6 0l20-19M10 47l17-13M56 47L39 34" fill="none" stroke="#9a9c9e" stroke-width="2"/></svg></div>
    <div class="cell"><svg viewBox="0 0 66 66"><clipPath id="mc"><rect width="66" height="66" rx="15"/></clipPath><g clip-path="url(#mc)"><rect width="66" height="66" fill="#7dcb67"/><path d="M0 20l60 60H0z" fill="#f0f0ee"/><path d="M0 30l36 36H0z" fill="#d877b8"/><path d="M36 40l30 26H36z" fill="#f5c94a"/><path d="M18 0h16v40H18z" fill="#2f72e0"/><path d="M45 0q2 22 24 24" fill="none" stroke="#e8e8e8" stroke-width="9"/><path d="M30 26l36 36" stroke="#f4f4f4" stroke-width="6"/></g><circle cx="25" cy="42" r="16" fill="#3178ef" stroke="#fff" stroke-width="2.500"/><path d="M25 31l8 20-8-5-8 5z" fill="#fff"/></svg></div>
    <div class="cell run"><svg viewBox="0 0 66 66"><rect width="66" height="66" rx="15" fill="#fdfdfc"/><g opacity=".85"><ellipse cx="33" cy="17" rx="8" ry="13" fill="#f29a38"/><ellipse cx="33" cy="17" rx="8" ry="13" fill="#e8d23c" transform="rotate(45 33 33)"/><ellipse cx="33" cy="17" rx="8" ry="13" fill="#a8cf46" transform="rotate(90 33 33)"/><ellipse cx="33" cy="17" rx="8" ry="13" fill="#5db87a" transform="rotate(135 33 33)"/><ellipse cx="33" cy="17" rx="8" ry="13" fill="#5a9be0" transform="rotate(180 33 33)"/><ellipse cx="33" cy="17" rx="8" ry="13" fill="#7d78cf" transform="rotate(225 33 33)"/><ellipse cx="33" cy="17" rx="8" ry="13" fill="#c56cb0" transform="rotate(270 33 33)"/><ellipse cx="33" cy="17" rx="8" ry="13" fill="#ea5d4c" transform="rotate(315 33 33)"/></g></svg></div>
    <div class="cell"><svg viewBox="0 0 66 66"><rect width="66" height="66" rx="15" fill="url(#gGreen)"/><rect x="10" y="18" width="32" height="30" rx="8" fill="url(#gWhite)"/><path d="M44 29l9-8q2-1 2 1v22q0 2-2 1l-9-8z" fill="#eef4ec"/></svg></div>
    <div class="cell run"><svg viewBox="0 0 66 66"><rect width="66" height="66" rx="15" fill="#fbfbfa"/><path d="M0 20v-5A15 15 0 0 1 15 0h36a15 15 0 0 1 15 15v5z" fill="#e4584c"/><text x="33" y="16.500" font-size="14" font-weight="600" text-anchor="middle" fill="#fff">JUN</text><text x="33" y="56" font-size="39" text-anchor="middle" fill="#222" letter-spacing="-1" font-weight="300">30</text></svg></div>
    <div class="cell"><svg viewBox="0 0 66 66"><path d="M58 10h8v14h-8z" fill="#999"/><path d="M58 24h9v12h-9z" fill="#4a90d8"/><path d="M58 36h9v10h-9z" fill="#e08a3a"/><path d="M58 46h8v10h-8z" fill="#57b861"/><rect width="64" height="66" rx="13" fill="#a27d4b"/><path d="M7 1v64" stroke="#87663a" stroke-width="1.500"/><circle cx="34" cy="33" r="20" fill="none" stroke="#7f6038" stroke-width="2"/><circle cx="34" cy="27" r="7.500" fill="#7f6038"/><path d="M20 46q3-8 14-8t14 8q-6 6-14 6t-14-6z" fill="#7f6038"/></svg></div>
    <div class="cell"><svg viewBox="0 0 66 66"><rect width="66" height="66" rx="15" fill="#fbfbfa"/><path d="M24 16h34M24 33h34M24 50h34" stroke="#b9b9b9" stroke-width="2"/><circle cx="12" cy="16" r="4" fill="#2f73ee" stroke="#bcd" stroke-width="2"/><circle cx="12" cy="33" r="4" fill="#e2463a" stroke="#ecc" stroke-width="2"/><circle cx="12" cy="50" r="4" fill="#f19a37" stroke="#edc" stroke-width="2"/></svg><span class="note-badge">6</span></div>
    <div class="cell"><svg viewBox="0 0 66 66"><rect width="66" height="66" rx="15" fill="#f1f0ec"/><path d="M0 16v-1A15 15 0 0 1 15 0h36a15 15 0 0 1 15 15v1z" fill="#f6cf4b"/><path d="M0 20h66" stroke="#aaa" stroke-width="2" stroke-dasharray="1.500 2"/><path d="M0 33h66M0 50h66" stroke="#c8c7c3" stroke-width="1.500"/></svg></div>
    <div class="cell"><svg viewBox="0 0 66 66"><rect width="66" height="66" rx="15" fill="#fff"/><circle cx="26" cy="40" r="19" fill="#ee7350"/><rect x="22" y="9" width="36" height="35" rx="4" fill="#57bff0" opacity=".9"/><path d="M13 43q6-24 12-18t-1 16q9-16 13-14t-2 12q10-14 12-8t10 0" fill="none" stroke="#14324e" stroke-width="3.500" stroke-linecap="round"/></svg></div>
    <div class="cell"><svg viewBox="0 0 66 66"><rect width="66" height="66" rx="15" fill="url(#gRed)"/><path d="M26 47V20l22-5v28" fill="none" stroke="#fff" stroke-width="3.500"/><path d="M26 20l22-5v7l-22 5z" fill="#fff"/><ellipse cx="20.500" cy="48" rx="7" ry="5.500" fill="#fff"/><ellipse cx="42.500" cy="44" rx="7" ry="5.500" fill="#fff"/></svg></div>
    <div class="cell"><svg viewBox="0 0 66 66"><rect width="66" height="66" rx="15" fill="#131b1c"/><path d="M23 20c0 3-2 5-5 5 0-3 2-5 5-5zM18 26c2 0 3-1 5-1s4 1 5 2.500c-4 2-3.500 7 .5 9-1 3-3 6-5 6s-2-1-4.500-1-2.500 1-4.500 1c-3 0-6-5-6-9.500 0-5 3-8 5.500-8 2 0 3 1 4 1z" fill="#fff"/><text x="30" y="43" font-size="26" font-weight="500" fill="#fff" letter-spacing="-1">tv</text></svg></div>
    <div class="cell"><svg viewBox="0 0 66 66"><rect width="66" height="66" rx="15" fill="#fff"/><path d="M14 14h12l26 38H40L14 17zM38 14h14v21zM14 31l14 21H14z" fill="#e9475f"/></svg></div>
    <div class="cell"><svg viewBox="0 0 66 66"><rect width="66" height="66" rx="15" fill="url(#gSky)"/><path d="M16 9h34l3 18H13z" fill="#eef2f5"/><path d="M13 27h40v3H13z" fill="#bfc8d0"/><path d="M33 30v25M23 56h20" stroke="#e8ecf0" stroke-width="3.500"/><circle cx="33" cy="17" r="6" fill="#f0a03a"/><path d="M33 17v-6a6 6 0 0 1 4 11z" fill="#4d8de0"/><path d="M33 17l4 5a6 6 0 0 1-9 0z" fill="#6dbd59"/></svg></div>
    <div class="cell run"><svg viewBox="0 0 66 66"><rect width="66" height="66" rx="15" fill="url(#gGreen)"/><path d="M16 43v12M27.500 31v24M39 10v45M50.500 22v33" stroke="#fff" stroke-width="8.500"/></svg></div>
    <div class="cell"><svg viewBox="0 0 66 66"><rect width="66" height="66" rx="15" fill="url(#gOrange)"/><path d="M24 56h32" stroke="#f8cf9a" stroke-width="2.500"/><path d="M11 56l4-13 36-30q5-1 3 4L20 49z" fill="#fff"/></svg></div>
    <div class="cell"><svg viewBox="0 0 66 66"><rect width="66" height="66" rx="15" fill="url(#gStore)"/><path d="M38 14L21 42M28 14l18 32M49 50l2 2M19 47l-3 5M11 40h28M48 40h7" fill="none" stroke="#fff" stroke-width="5.500" stroke-linecap="round"/></svg></div>
    <div class="cell"><svg viewBox="0 0 66 66"><rect width="66" height="66" rx="15" fill="url(#gGrey)"/><circle cx="33" cy="33" r="27" fill="#55575a"/><circle cx="33" cy="33" r="26" fill="none" stroke="#202224" stroke-width="5" stroke-dasharray="2 1.270"/><circle cx="33" cy="33" r="18" fill="#3a3c3e" stroke="#b0b2b4" stroke-width="3.500"/><path d="M33 33h19M33 33l-10-16M33 33L23 49" stroke="#b0b2b4" stroke-width="3.500"/><circle cx="33" cy="33" r="4" fill="#202224" stroke="#b0b2b4" stroke-width="2"/></svg><span class="note-badge">1</span></div>
    <div class="cell"><svg viewBox="0 0 66 66"><rect width="66" height="66" rx="15" fill="#b2b4b3"/><rect x="20" y="5" width="27" height="57" rx="6" fill="url(#gPhone)" stroke="#111" stroke-width="2"/><rect x="29" y="7" width="9" height="3" rx="1.500" fill="#111"/></svg></div>
    <div class="cell"><svg viewBox="0 0 66 66"><rect width="66" height="66" rx="15" fill="#9a4cc8"/><rect x="5" y="4" width="56" height="56" rx="10" fill="#b562e0"/><path d="M20 16h26q6 0 6 6v17q0 6-6 6H32l-8 8v-8h-4q-6 0-6-6V22q0-6 6-6z" fill="#fff"/><path d="M33 21v11" stroke="#8d3cc0" stroke-width="5"/><circle cx="33" cy="38" r="2.800" fill="#8d3cc0"/></svg></div>
    <div class="rule"></div>
    <div class="cell run"><svg viewBox="0 0 66 66"><rect width="66" height="66" rx="15" fill="#f2f2f1"/><use href="#chrome" width="66" height="66"/><path d="M0 36V15L18 0h18z" fill="#2453b8"/><text transform="translate(8 24) rotate(-45)" font-size="10" font-weight="700" fill="#fff">BETA</text></svg></div>
    <div class="cell run"><svg viewBox="0 0 66 66"><rect width="66" height="66" rx="13" fill="#fafafa"/><path d="M0 17h66M0 25.500h66M0 34h66M0 42.500h66M0 51h66" stroke="#c4c8cc" stroke-width="1.500"/><path d="M10 0v66" stroke="#efb4b4"/><path d="M61-6l2 9-33 58-4 7 2-9z" fill="#8193a5" stroke="#55616e"/></svg></div>
    <div class="cell run"><svg viewBox="0 0 66 66"><rect width="66" height="66" rx="13" fill="#e2ca63"/><path d="M0 13A13 13 0 0 1 13 0h40a13 13 0 0 1 13 13v32L50 60H10Q0 58 0 48z" fill="#f5e88e"/><path d="M12 22q6-16 8-6t4 6q3-10 6-2M34 20h20M12 32h42M12 43h24" fill="none" stroke="#d8c65c" stroke-width="4"/></svg></div>
    <div class="cell run"><svg viewBox="0 0 66 66"><rect width="66" height="66" rx="15" fill="#fff"/><path d="M43 10l13 5v36l-13 5z" fill="#4a9fe8"/><path d="M43 10v14L13 46l-4-4z" fill="#1f6fb8"/><path d="M43 56V42L13 20l-4 4z" fill="#2f86d2"/></svg></div>
    <div class="cell run"><svg viewBox="0 0 66 66"><rect x="1.500" y="1.500" width="63" height="63" rx="13" fill="#8fb4e8" stroke="#f2f2f2" stroke-width="4"/><path d="M4 36h58v18q0 8-8 8H12q-8 0-8-8z" fill="#2f4c80"/><path d="M5 50q8-8 16 0t16-1v13H12q-7-1-7-8z" fill="#d8dde2"/><path d="M36 44h22l6 20q1 4-4 4H34q-5 0-4-4z" fill="#c5cdd3" stroke="#707478"/><rect x="34" y="34" width="27" height="13" rx="4" fill="#141414"/></svg></div>
    <div class="cell run"><svg viewBox="0 0 66 66"><rect x="1" y="1" width="63" height="64" rx="13" fill="#22233f"/><path d="M16 5.500h32" stroke="#f0d84a" stroke-width="3.500"/><path d="M4 46V18q0-9 7-12" fill="none" stroke="#e2473c" stroke-width="3"/><path d="M61 46V18q0-9-7-12" fill="none" stroke="#8ae07a" stroke-width="3"/><path d="M4 51q1 10 10 10h38q9 0 9-10" fill="none" stroke="#4c9df0" stroke-width="3"/><circle cx="32" cy="33" r="19" fill="#14142a"/><path d="M31 34L38 14l2 3-7 18M32 34l-1-19 2-1 3 18" fill="none" stroke="#ddd" stroke-width="1.800"/><circle cx="31" cy="35" r="4" fill="#ddd"/></svg></div>
    <div class="cell run"><svg viewBox="0 0 66 66"><rect width="66" height="66" rx="15" fill="#21143f"/><path d="M33 62C16 62 4 50 4 35q0-8 6-16l4 5 5-11q3 6 7 10 3-1 6 0 0-12 10-19 0 9 6 15l3 3 1-6q10 8 10 20C62 51 49 62 33 62z" fill="url(#gFire)"/><path d="M12 28q6-6 15-2l-4 6q8 2 8 5-6 0-8 6 8 6 16-1 5-6 2-14 9 8 3 19-6 8-16 8-11-1-15-11-3-8-1-16z" fill="#2450c4"/></svg></div>
    <div class="cell run"><svg viewBox="0 0 66 66"><rect width="66" height="66" rx="15" fill="#f3f6fb"/><path transform="translate(9 9) scale(2)" fill="#202226" d="M22.2819 9.8211a5.9847 5.9847 0 0 0-.5157-4.9108 6.0462 6.0462 0 0 0-6.5098-2.9A6.0651 6.0651 0 0 0 4.9807 4.1818a5.9847 5.9847 0 0 0-3.9977 2.9 6.0462 6.0462 0 0 0 .7427 7.0966 5.98 5.98 0 0 0 .511 4.9107 6.051 6.051 0 0 0 6.5146 2.9001A5.9847 5.9847 0 0 0 13.2599 24a6.0557 6.0557 0 0 0 5.7718-4.2058 5.9894 5.9894 0 0 0 3.9977-2.9001 6.0557 6.0557 0 0 0-.7475-7.0729zm-9.022 12.6081a4.4755 4.4755 0 0 1-2.8764-1.0408l.1419-.0804 4.7783-2.7582a.7948.7948 0 0 0 .3927-.6813v-6.7369l2.02 1.1686a.071.071 0 0 1 .038.052v5.5826a4.504 4.504 0 0 1-4.4945 4.4944zm-9.6607-4.1254a4.4708 4.4708 0 0 1-.5346-3.0137l.142.0852 4.783 2.7582a.7712.7712 0 0 0 .7806 0l5.8428-3.3685v2.3324a.0804.0804 0 0 1-.0332.0615L9.74 19.9502a4.4992 4.4992 0 0 1-6.1408-1.6464zM2.3408 7.8956a4.485 4.485 0 0 1 2.3655-1.9728V11.6a.7664.7664 0 0 0 .3879.6765l5.8144 3.3543-2.0201 1.1685a.0757.0757 0 0 1-.071 0l-4.8303-2.7865A4.504 4.504 0 0 1 2.3408 7.872zm16.5963 3.8558L13.1038 8.364 15.1192 7.2a.0757.0757 0 0 1 .071 0l4.8303 2.7913a4.4944 4.4944 0 0 1-.6765 8.1042v-5.6772a.79.79 0 0 0-.407-.667zm2.0107-3.0231l-.142-.0852-4.7735-2.7818a.7759.7759 0 0 0-.7854 0L9.409 9.2297V6.8974a.0662.0662 0 0 1 .0284-.0615l4.8303-2.7866a4.4992 4.4992 0 0 1 6.6802 4.66zM8.3065 12.863l-2.02-1.1638a.0804.0804 0 0 1-.038-.0567V6.0742a4.4992 4.4992 0 0 1 7.3757-3.4537l-.142.0805L8.704 5.459a.7948.7948 0 0 0-.3927.6813zm1.0976-2.3654l2.602-1.4998 2.6069 1.4998v2.9994l-2.5974 1.4997-2.6067-1.4997Z"/></svg></div>
    <div class="cell run"><svg viewBox="0 0 66 66"><rect width="66" height="66" rx="15" fill="#f2f2f1"/><use href="#chrome" width="66" height="66"/></svg></div>
    <div class="cell run"><svg viewBox="0 0 66 66"><rect x="1.500" y="1.500" width="63" height="63" rx="14" fill="#000" stroke="#a9b2b8" stroke-width="2.500"/><rect x="7" y="7" width="52" height="52" rx="8" fill="#222"/><path d="M13 13l6 4-6 5M22 25h9" fill="none" stroke="#fff" stroke-width="2.200"/></svg></div>
    <div class="cell run"><svg viewBox="0 0 66 66"><rect width="66" height="66" rx="15" fill="#f5f0ea"/><path d="M8 20q6-1 7 6l4 15q2 7 6 1l6-16q3-7 6 0l5 15q3 7 6 0l5-18q1-3 6-3" fill="none" stroke="#111" stroke-width="6"/></svg></div>
    <div class="rule"></div>
    <div class="cell"><svg viewBox="0 0 66 66"><path d="M13-6h26l14 14v20H13z" fill="#ececec" stroke="#bbb"/><path d="M32-4v24" stroke="#555" stroke-width="4" stroke-dasharray="2 1.500"/><path d="M0 12q0-4 4-4h16l6 7h36q4 0 4 4v42q0 5-5 5H5q-5 0-5-5z" fill="#58b4e8"/><path d="M0 19h66v42q0 5-5 5H5q-5 0-5-5z" fill="#6cc4f5"/></svg></div>
    <div class="cell"><svg viewBox="0 0 66 66"><rect y="-6" width="66" height="77" fill="#fff"/><path d="M0-6h66v10H0z" fill="#f0a8b6"/><path d="M2 2h62" stroke="#fff" stroke-width="3"/><path d="M0 4h66v4H0z" fill="#2f66d8"/><rect x="20" y="8" width="8" height="3" fill="#2f66d8"/><path d="M7 16h28" stroke="#333" stroke-width="2"/><path d="M7 24h40M7 32h50M7 36h54M7 40h52M7 44h30M7 53h8M9 58h34M9 62h36" stroke="#999" stroke-width="1.500"/><use href="#chrome" x="44" y="46" width="26" height="26"/></svg></div>
    <div class="cell"><svg viewBox="0 0 66 66"><rect y="-6" width="66" height="77" fill="#fff"/><path d="M0-6h66v10H0z" fill="#f0a8b6"/><path d="M2 2h62" stroke="#fff" stroke-width="3"/><path d="M0 4h66v5H0z" fill="#111"/><path d="M0 10h30v61H0z" fill="#f6f7f9"/><path d="M34 15h28M34 19h24M34 24h28M34 28h20M34 33h26M34 38h18M34 48h12M4 14h14M4 22h18M4 28h20M4 33h20" stroke="#888" stroke-width="1.500"/><use href="#chrome" x="44" y="46" width="26" height="26"/></svg></div>
    <div class="cell"><svg viewBox="0 0 66 66"><path d="M6 8l10-12 8 4 10-6 10 8 10-4 8 12-6 8H10z" fill="#e6e6e4"/><path d="M14 2l6 6M28 0l4 8 8-5M46 3l6 5" stroke="#666" stroke-width="2.500" fill="none"/><path d="M38 0l5 6" stroke="#d86b2c" stroke-width="3"/><path d="M4 11q29 8 58 0l-8 53q-1 5-21 5t-21-5z" fill="url(#gTrash)"/><ellipse cx="33" cy="11" rx="29" ry="3.500" fill="none" stroke="#b8bcc0" stroke-width="2"/></svg></div>
  </div>
</footer>
</body>
</html>
